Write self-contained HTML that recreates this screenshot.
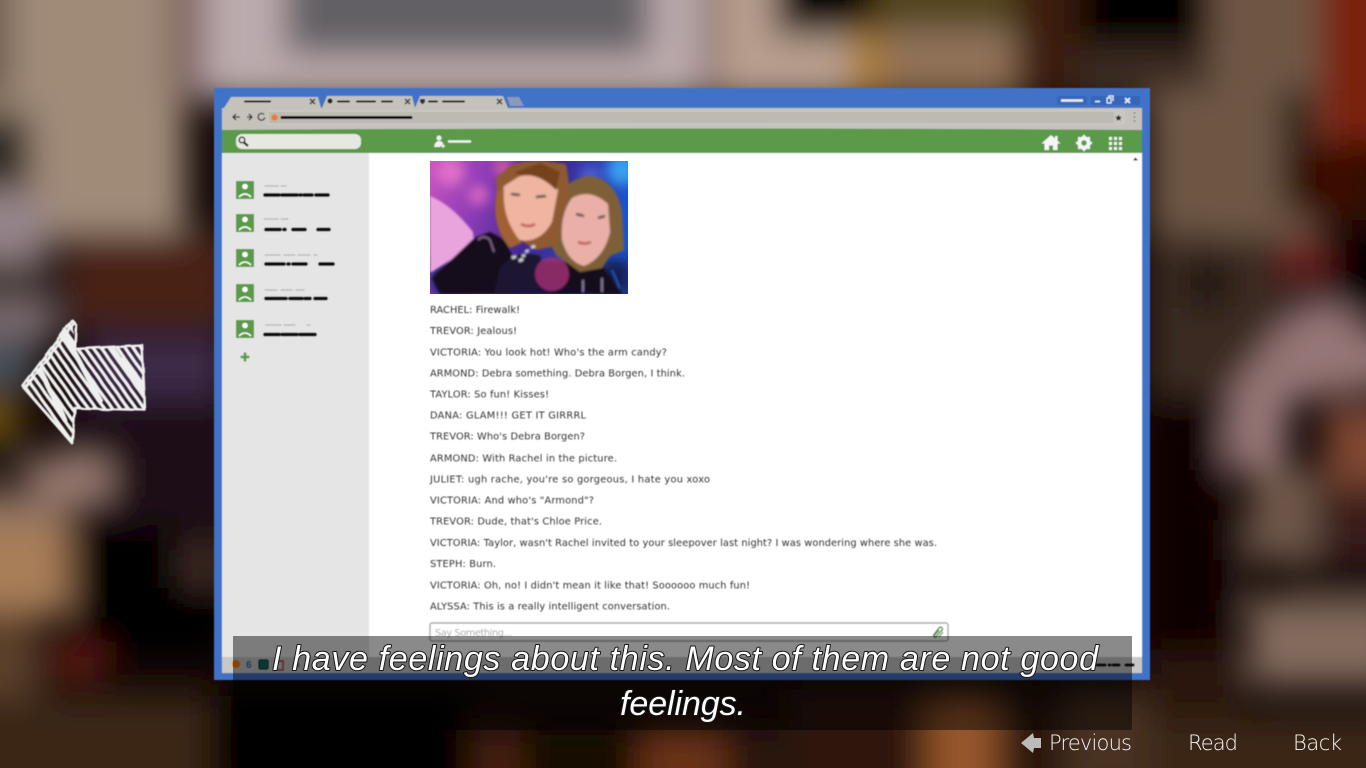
<!DOCTYPE html>
<html><head><meta charset="utf-8"><title>Life is Strange</title>
<style>
html,body{margin:0;padding:0;width:1366px;height:768px;overflow:hidden;background:#150a08}
svg{display:block}
.c{font-family:"DejaVu Sans",sans-serif;font-size:9.8px;fill:#333}
.s{font-family:"Liberation Sans",sans-serif;font-style:italic;font-size:34px;fill:#fff;stroke:#161616;stroke-width:2px;paint-order:stroke;stroke-linejoin:round}
.b{font-family:"DejaVu Sans",sans-serif;font-weight:200;font-size:21px;fill:#f6f6f6}
.r{fill:none;stroke:#111;stroke-width:3.8;stroke-linecap:round}
.g{fill:none;stroke:#b5b5b5;stroke-width:1.2;stroke-linecap:round}
</style></head><body>
<svg width="1366" height="768" viewBox="0 0 1366 768" xmlns="http://www.w3.org/2000/svg">
<defs>
<filter id="bl" x="-10%" y="-10%" width="120%" height="120%"><feGaussianBlur stdDeviation="17"/></filter>
<filter id="s1"><feGaussianBlur stdDeviation="0.5"/></filter>
<filter id="s2" x="-10%" y="-10%" width="120%" height="120%"><feGaussianBlur stdDeviation="1.1"/></filter>
<filter id="s3" x="-30%" y="-30%" width="160%" height="160%"><feGaussianBlur stdDeviation="6"/></filter>
<filter id="ro" x="-5%" y="-5%" width="110%" height="110%"><feTurbulence type="fractalNoise" baseFrequency="0.06" numOctaves="2" seed="4"/><feDisplacementMap in="SourceGraphic" scale="3.5"/><feGaussianBlur stdDeviation="0.5"/></filter>
<linearGradient id="pic" x1="0" y1="0" x2="1" y2="0.25"><stop offset="0" stop-color="#c955bd"/><stop offset=".28" stop-color="#8f3cb8"/><stop offset=".6" stop-color="#40288f"/><stop offset="1" stop-color="#1c52cc"/></linearGradient>
<clipPath id="pc"><rect x="430" y="161" width="198" height="133"/></clipPath>
<clipPath id="ac"><path d="M72 320 L23 386 L72 443 L75 408 L145 410 L142 345 L75 349Z"/></clipPath>
</defs>

<rect width="1366" height="768" fill="#150a08"/>
<g filter="url(#bl)">
 <rect x="-50" y="-50" width="235" height="290" fill="#a08a78"/>
 <rect x="-50" y="-50" width="60" height="150" fill="#6b5a4c"/>
 <rect x="-50" y="115" width="80" height="75" fill="#2c2622"/>
 <rect x="170" y="-50" width="35" height="150" fill="#7e6462"/>
 <rect x="205" y="-50" width="510" height="150" fill="#bcabad"/>
 <rect x="285" y="-50" width="365" height="105" fill="#646165"/>
 <rect x="700" y="-50" width="20" height="150" fill="#8a7070"/>
 <rect x="720" y="-50" width="500" height="150" fill="#b89f8e"/>
 <rect x="775" y="-50" width="100" height="85" fill="#050402"/>
 <rect x="850" y="30" width="35" height="70" fill="#a87a30"/>
 <rect x="875" y="-50" width="140" height="85" fill="#54451f"/>
 <rect x="885" y="40" width="130" height="60" fill="#8f7055"/>
 <rect x="1015" y="-50" width="65" height="150" fill="#3a1a0a"/>
 <rect x="1080" y="-50" width="130" height="95" fill="#000"/>
 <rect x="1080" y="45" width="130" height="60" fill="#3a2a20"/>
 <rect x="1210" y="-50" width="110" height="290" fill="#6e5645"/>
 <rect x="1150" y="90" width="130" height="145" fill="#6e5645"/>
 <rect x="1282" y="90" width="30" height="120" fill="#241208"/>
 <rect x="1320" y="-50" width="80" height="200" fill="#7a2010"/>
 <rect x="1300" y="140" width="80" height="80" fill="#3a0a06"/>
 <rect x="-50" y="195" width="95" height="65" fill="#94848a"/>
 <rect x="-50" y="262" width="100" height="32" fill="#4a3c38"/>
 <rect x="-50" y="300" width="105" height="40" fill="#7e7074"/>
 <rect x="-50" y="345" width="85" height="40" fill="#4a5560"/>
 <rect x="-50" y="392" width="70" height="45" fill="#6b5010"/>
 <rect x="-50" y="440" width="80" height="30" fill="#1d120c"/>
 <rect x="65" y="233" width="170" height="95" fill="#4a2413"/>
 <rect x="85" y="335" width="140" height="65" fill="#3e2a48"/>
 <rect x="60" y="405" width="170" height="120" fill="#1a0e12"/>
 <rect x="30" y="458" width="80" height="42" fill="#9a7c72"/>
 <rect x="-50" y="490" width="120" height="40" fill="#8a7060"/>
 <rect x="-50" y="525" width="120" height="90" fill="#a87e58"/>
 <rect x="-50" y="610" width="90" height="100" fill="#5a3f2a"/>
 <rect x="75" y="530" width="150" height="130" fill="#000"/>
 <rect x="180" y="540" width="50" height="48" fill="#3e2a26"/>
 <rect x="50" y="642" width="55" height="38" fill="#5a1208"/>
 <rect x="-50" y="696" width="260" height="110" fill="#3a2518"/>
 <rect x="214" y="690" width="250" height="110" fill="#050201"/>
 <rect x="475" y="730" width="45" height="70" fill="#4a200e"/>
 <rect x="520" y="735" width="120" height="70" fill="#180905"/>
 <rect x="640" y="728" width="85" height="70" fill="#6a3212"/>
 <rect x="725" y="730" width="60" height="70" fill="#2a1208"/>
 <rect x="790" y="690" width="130" height="110" fill="#2e1307"/>
 <rect x="925" y="695" width="75" height="110" fill="#96562a"/>
 <rect x="1005" y="700" width="60" height="100" fill="#2c1408"/>
 <rect x="1065" y="690" width="85" height="110" fill="#4a3020"/>
 <rect x="1150" y="237" width="130" height="160" fill="#3a2a22"/>
 <rect x="1190" y="258" width="35" height="50" fill="#141010"/>
 <rect x="1280" y="240" width="50" height="45" fill="#6a1f1f"/>
 <rect x="1335" y="240" width="65" height="70" fill="#000"/>
 <polygon points="1300,300 1330,300 1400,345 1400,385 1290,400 1285,470 1225,470 1225,400" fill="#957676"/>
 <rect x="1325" y="405" width="80" height="85" fill="#7e4630"/>
 <rect x="1250" y="470" width="70" height="90" fill="#6e564a"/>
 <rect x="1325" y="495" width="80" height="65" fill="#3a1f1a"/>
 <rect x="1150" y="410" width="70" height="240" fill="#070101"/>
 <rect x="1220" y="520" width="30" height="90" fill="#1e0f0a"/>
 <rect x="1285" y="566" width="120" height="24" fill="#0e0403"/>
 <rect x="1250" y="600" width="150" height="85" fill="#836a5d"/>
 <rect x="1150" y="650" width="90" height="60" fill="#2a1208"/>
 <rect x="1150" y="715" width="250" height="90" fill="#3a2518"/>
</g>

<g filter="url(#s1)">
 <rect x="214" y="88" width="936" height="592" fill="#3f72c8"/>
 <path d="M224 108 L231 97 H318 L321 108Z" fill="#c4c2bb"/>
 <path d="M322 108 L327 96 H412 L415 108Z" fill="#c4c2bb"/>
 <path d="M415 108 L420 96 H503 L508 108Z" fill="#c4c2bb"/>
 <path d="M507 97 H519 L524 106 H510Z" fill="#8a9ab8"/>
 <rect x="222" y="108" width="920" height="23" fill="#c4c2bb"/>
 <rect x="268" y="111" width="856" height="13" fill="#bcbab3" stroke="#d0cec8" stroke-width="1"/>
 <rect x="1114" y="112" width="11" height="11" fill="#c9c7c0"/>
 <path d="M245 101.500H270M338 101.500H349M357 101.500H375M382 101.500H392M429 101.500H437M443 101.500H464" stroke="#111" stroke-width="2" stroke-linecap="round" fill="none"/>
 <path d="M310 99l5 5M315 99l-5 5M405 99l5 5M410 99l-5 5M497 99l5 5M502 99l-5 5" stroke="#333" stroke-width="1.500"/>
 <circle cx="330" cy="101" r="2.500" fill="#222"/>
 <path d="M420 99h5v3l-2.500 2.500-2.500-2.500z" fill="#333"/>
 <path d="M240 117h-7m3-3l-3 3 3 3M247 117h5m-3-3l3 3-3 3" stroke="#333" stroke-width="1.300" fill="none"/>
 <path d="M264 114.500a3.400 3.400 0 1 0 .8 3" stroke="#333" stroke-width="1.300" fill="none"/>
 <circle cx="274.500" cy="117.500" r="3.200" fill="#f07c2c"/>
 <path d="M282 117.500H411" stroke="#111" stroke-width="3" stroke-linecap="round"/>
 <path d="M1118.500 114.500l1 2.200 2.400.2-1.800 1.600.6 2.400-2.200-1.300-2.200 1.300.6-2.400-1.800-1.600 2.400-.2z" fill="#222"/>
 <path d="M1134.500 113v.1M1134.500 117v.1M1134.500 121v.1" stroke="#666" stroke-width="1.600" stroke-linecap="round"/>
 <rect x="1057" y="96" width="30" height="9" rx="2" fill="#3566b8"/>
 <rect x="1091" y="96" width="49" height="9" rx="2" fill="#3566b8"/>
 <path d="M1061 100.500H1083" stroke="#e8eef8" stroke-width="2.600"/>
 <path d="M1095 101.500h5" stroke="#e8eef8" stroke-width="1.600"/>
 <path d="M1107 103v-5h4v5h-4M1109 98v-2h4v5" fill="none" stroke="#e8eef8" stroke-width="1.200"/>
 <path d="M1125 98l5 5M1130 98l-5 5" stroke="#e8eef8" stroke-width="1.700"/>
 <path d="M222 130 Q680 127 1142 130 V153 Q900 154 680 153 T222 154Z" fill="#5a9a48"/>
 <rect x="236" y="134" width="125" height="15" rx="6" fill="#e6e9e2"/>
 <circle cx="242" cy="140" r="2.800" fill="none" stroke="#222" stroke-width="1.400"/>
 <path d="M244 142.500l4 3.500" stroke="#222" stroke-width="2.200"/>
 <circle cx="439" cy="138" r="2.500" fill="#f2f2f2"/>
 <path d="M434 147q1-6 5-6t4 3l-3 3z" fill="#f2f2f2"/>
 <path d="M443 144v4M441 146h4" stroke="#f2f2f2" stroke-width="1.200"/>
 <path d="M449 141.500H470" stroke="#f2f2f2" stroke-width="2.400" stroke-linecap="round"/>
 <path d="M1051 135l-9.500 8.500h3V150h4.500v-4.500h4V150h4.500v-6.500h3l-3-2.800V136h-2.500v2.500z" fill="#f5f5f5"/>
 <circle cx="1084" cy="143" r="5" fill="none" stroke="#f5f5f5" stroke-width="3.400"/>
 <path d="M1084 135v16M1076 143h16M1078.300 137.300l11.400 11.400M1089.700 137.300l-11.400 11.400" stroke="#f5f5f5" stroke-width="2.200"/>
 <circle cx="1084" cy="143" r="2.700" fill="#5a9a48"/>
 <g fill="#f5f5f5">
  <rect x="1109" y="137" width="3" height="3"/><rect x="1114" y="137" width="3" height="3"/><rect x="1119" y="137" width="3" height="3"/>
  <rect x="1109" y="142" width="3" height="3"/><rect x="1114" y="142" width="3" height="3"/><rect x="1119" y="142" width="3" height="3"/>
  <rect x="1109" y="147" width="3" height="3"/><rect x="1114" y="147" width="3" height="3"/><rect x="1119" y="147" width="3" height="3"/>
 </g>
 <rect x="222" y="153" width="920" height="520" fill="#fff"/>
 <rect x="222" y="153" width="147" height="504" fill="#e5e5e5"/>
 <rect x="222" y="657" width="920" height="16" fill="#c8c8c8"/>
 <path d="M1133 160.500l2.500-3 2.500 3z" fill="#111"/>
 <g fill="#5a9a48">
  <rect x="236" y="181" width="18" height="18"/><rect x="236" y="214" width="18" height="18"/><rect x="236" y="249" width="18" height="18"/><rect x="236" y="284" width="18" height="18"/><rect x="236" y="320" width="18" height="18"/>
 </g>
 <g fill="#fff">
  <circle cx="245" cy="186.500" r="2.800"/><circle cx="245" cy="219.500" r="2.800"/><circle cx="245" cy="254.500" r="2.800"/><circle cx="245" cy="289.500" r="2.800"/><circle cx="245" cy="325.500" r="2.800"/>
 </g>
 <path fill="none" stroke="#fff" stroke-width="1.600" d="M239 197q6-6 12 0M239 230q6-6 12 0M239 265q6-6 12 0M239 300q6-6 12 0M239 336q6-6 12 0"/>
 <path class="g" d="M265 186h13M281 186h5M264 219h14M281 219h7M265 255h15M284 255h11M298 255h12M314 255h3M265 290h12M281 290h11M296 290h8M266 325h15M284 325h11M307 325h3"/>
 <path class="r" d="M265 195h14M282 195h15M300 195h1M304 195h8M316 195h12"/>
 <path class="r" d="M266 229.500h14M284 229.500h1M293 229.500h12M318 229.500h11"/>
 <path class="r" d="M266 264h18M288 264h1M293 264h13M320 264h13"/>
 <path class="r" d="M266 298.500h20M290 298.500h12M305 298.500h5M315 298.500h11"/>
 <path class="r" d="M265 334.500h14M282 334.500h15M300 334.500h15"/>
 <path d="M245 352.500v9M240.500 357h9" stroke="#5a9a48" stroke-width="2.600"/>
</g>

<g clip-path="url(#pc)">
 <rect x="430" y="161" width="198" height="133" fill="url(#pic)"/>
 <g filter="url(#s3)">
  <circle cx="450" cy="172" r="14" fill="#e070c8"/>
  <circle cx="478" cy="195" r="10" fill="#d868c0"/>
  <circle cx="503" cy="168" r="8" fill="#e8689c"/>
  <circle cx="622" cy="170" r="15" fill="#38a0f0"/>
  <circle cx="590" cy="176" r="9" fill="#5a68d8"/>
  <rect x="430" y="255" width="40" height="40" fill="#1a2270"/>
  <rect x="600" y="260" width="30" height="35" fill="#141a50"/>
 </g>
 <g filter="url(#s2)">
  <path d="M430 196 Q452 205 473 232 L474 245 L432 272 L430 272Z" fill="#e9a4dd"/>
  <path d="M432 278 L474 238 L490 232 L505 240 L515 262 L555 262 L600 262 L622 294 H440Z" fill="#15101c"/>
  <path d="M478 240q6-6 12 0l4 12" stroke="#8a6a92" stroke-width="1.600" fill="none"/>
  <path d="M500 268 Q516 248 540 256 L552 294 H494Z" fill="#1c1830"/>
  <path d="M553 214 Q560 180 588 176 Q616 178 622 212 L624 250 L610 256 L602 268 L580 272 L556 255 L548 240Z" fill="#7e6038"/>
  <path d="M572 198 Q590 188 608 204 L610 232 Q604 258 584 266 Q568 262 562 240 Q560 214 572 198Z" fill="#eab0a8"/>
  <path d="M510 166 Q524 160 545 161 L566 164 L570 190 L562 222 L556 246 L536 250 L520 240 L498 205 L496 178Z" fill="#8f5a30"/>
  <path d="M504 186 L520 176 Q546 172 558 190 L552 222 Q540 244 518 240 Q504 232 500 210Z" fill="#efb5a0"/>
  <path d="M497 190 Q490 226 510 248 L522 243 Q502 220 504 190Z" fill="#a06030"/>
  <path d="M515 172 L540 163 L560 172 L556 190 Q538 172 520 176Z" fill="#75421f"/>
  <path d="M511 194l9 1M536 197l10-1M576 214l8 2M598 218l7-2" stroke="#4a4a44" stroke-width="2.600" fill="none"/>
  <path d="M521 224q8 4 14 0M578 242q7 3 13 0" stroke="#b85a58" stroke-width="2.600" fill="none"/>
  <circle cx="552" cy="274" r="17" fill="#9c2e72" opacity=".85"/>
  <path d="M512 258l4-2M519 261l4-2M525 252l4-2M531 248l4-2M522 256l3-1" stroke="#ddd" stroke-width="2.800"/>
  <path d="M583 292v-12M602 292v-14" stroke="#a8a0c8" stroke-width="1.300"/>
  <path d="M612 270l8 18" stroke="#2060c0" stroke-width="2"/>
 </g>
</g>

<g filter="url(#s1)">
<text class="c" x="430" y="313" textLength="90" lengthAdjust="spacing">RACHEL: Firewalk!</text>
<text class="c" x="430" y="334" textLength="87" lengthAdjust="spacing">TREVOR: Jealous!</text>
<text class="c" x="430" y="355.500" textLength="237" lengthAdjust="spacing">VICTORIA: You look hot! Who's the arm candy?</text>
<text class="c" x="430" y="376.500" textLength="255" lengthAdjust="spacing">ARMOND: Debra something. Debra Borgen, I think.</text>
<text class="c" x="430" y="397.500" textLength="119" lengthAdjust="spacing">TAYLOR: So fun! Kisses!</text>
<text class="c" x="430" y="418.500" textLength="156" lengthAdjust="spacing">DANA: GLAM!!! GET IT GIRRRL</text>
<text class="c" x="430" y="439.500" textLength="155" lengthAdjust="spacing">TREVOR: Who's Debra Borgen?</text>
<text class="c" x="430" y="461.500" textLength="187" lengthAdjust="spacing">ARMOND: With Rachel in the picture.</text>
<text class="c" x="430" y="482.500" textLength="280" lengthAdjust="spacing">JULIET: ugh rache, you're so gorgeous, I hate you xoxo</text>
<text class="c" x="430" y="503.500" textLength="164" lengthAdjust="spacing">VICTORIA: And who's "Armond"?</text>
<text class="c" x="430" y="524.500" textLength="172" lengthAdjust="spacing">TREVOR: Dude, that's Chloe Price.</text>
<text class="c" x="430" y="546" textLength="507" lengthAdjust="spacing">VICTORIA: Taylor, wasn't Rachel invited to your sleepover last night? I was wondering where she was.</text>
<text class="c" x="430" y="567" textLength="66" lengthAdjust="spacing">STEPH: Burn.</text>
<text class="c" x="430" y="588.500" textLength="320" lengthAdjust="spacing">VICTORIA: Oh, no! I didn't mean it like that! Soooooo much fun!</text>
<text class="c" x="430" y="609.500" textLength="240" lengthAdjust="spacing">ALYSSA: This is a really intelligent conversation.</text>
<rect x="430" y="623" width="518" height="18" rx="2" fill="#fff" stroke="#aaa" stroke-width="1.400"/>
<text class="c" x="435" y="636" textLength="77" lengthAdjust="spacing" style="fill:#aaa">Say Something...</text>
<path d="M933 636l6-8q2-2 3 0t-1 3l-5 6q-2 1-2-1l5-6" fill="none" stroke="#5a9a48" stroke-width="1.500"/>
<path d="M939 637l4-5" stroke="#5a9a48" stroke-width="1.200"/>
<circle cx="236" cy="664" r="4" fill="#f07c1c"/>
<text x="246" y="668" font-family="Liberation Sans,sans-serif" font-size="10" font-weight="bold" fill="#3566b8">6</text>
<rect x="259" y="660" width="9" height="9" rx="1.500" fill="#0e6b55" stroke="#123" stroke-width="1"/>
<rect x="275" y="661" width="8" height="9" fill="none" stroke="#b03030" stroke-width="1.300"/>
<circle cx="296" cy="665" r="3.500" fill="#777"/>
<path class="r" d="M1097 665h8M1109 665h1M1113 665h6M1126 665h7" style="stroke-width:2.800"/>
</g>

<rect x="233" y="636" width="899" height="94" fill="#000" fill-opacity=".46"/>
<text class="s" x="272" y="670" textLength="826" lengthAdjust="spacing">I have feelings about this. Most of them are not good</text>
<text class="s" x="620" y="715" textLength="126" lengthAdjust="spacing">feelings.</text>

<g filter="url(#ro)" fill="none" stroke="#eee" stroke-linecap="round" stroke-linejoin="round">
 <g clip-path="url(#ac)" stroke-width="3.400">
  <path d="M-40 318l90 127M-32 318l90 127M-24 318l90 127M-16 318l90 127M-8 318l90 127M0 318l90 127M8 318l90 127M16 318l90 127M24 318l90 127M32 318l90 127M40 318l90 127M48 318l90 127M56 318l90 127M64 318l90 127M72 318l90 127M80 318l90 127M88 318l90 127M96 318l90 127M104 318l90 127M112 318l90 127M120 318l90 127"/>
  <path stroke-width="5" d="M60 325l40 75M110 345l34 50M122 360l22 30M40 370l25 50"/>
 </g>
 <path d="M72 320 L23 386 L72 443 L75 408 L145 410 L142 345 L75 349 L76 325Z" stroke-width="2.600"/>
 <path d="M74 322l-47 64M72 443L24 388" stroke-width="2.600"/>
</g>

<path d="M1033 733 L1021 743 L1033 753 L1034 748 H1041 V738 H1034Z" fill="#bbb"/>
<text class="b" x="1049" y="750" textLength="83" lengthAdjust="spacing">Previous</text>
<text class="b" x="1188" y="750" textLength="50" lengthAdjust="spacing">Read</text>
<text class="b" x="1293" y="750" textLength="49" lengthAdjust="spacing">Back</text>
</svg>
</body></html>
